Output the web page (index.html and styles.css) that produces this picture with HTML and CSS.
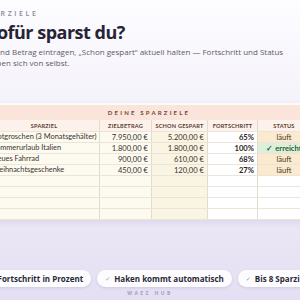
FILE: index.html
```html
<!DOCTYPE html>
<html lang="de">
<head>
<meta charset="utf-8">
<link rel="stylesheet" href="styles.css">
</head>
<body>
<div class="page">
  <header class="intro">
    <div class="eyebrow">Sparziele</div>
    <h1 class="title">Wofür sparst du?</h1>
    <p class="lead">Ziel und Betrag eintragen, „Schon gespart“ aktuell halten — Fortschritt und Status ergeben sich von selbst.</p>
  </header>

  <section class="sheet">
    <div class="band">Deine Sparziele</div>
    <div class="grid">
      <div class="row head">
        <div class="c name">Sparziel</div>
        <div class="c goal">Zielbetrag</div>
        <div class="c saved">Schon gespart</div>
        <div class="c prog">Fortschritt</div>
        <div class="c stat">Status</div>
      </div>
      <div class="row">
        <div class="c name">Notgroschen (3 Monatsgehälter)</div>
        <div class="c goal num">7.950,00 €</div>
        <div class="c saved num">5.200,00 €</div>
        <div class="c prog num">65%</div>
        <div class="c stat run">läuft</div>
      </div>
      <div class="row">
        <div class="c name">Sommerurlaub Italien</div>
        <div class="c goal num">1.800,00 €</div>
        <div class="c saved num">1.800,00 €</div>
        <div class="c prog num done">100%</div>
        <div class="c stat ok">✓ erreicht</div>
      </div>
      <div class="row">
        <div class="c name">Neues Fahrrad</div>
        <div class="c goal num">900,00 €</div>
        <div class="c saved num">610,00 €</div>
        <div class="c prog num">68%</div>
        <div class="c stat run">läuft</div>
      </div>
      <div class="row">
        <div class="c name">Weihnachtsgeschenke</div>
        <div class="c goal num">450,00 €</div>
        <div class="c saved num">120,00 €</div>
        <div class="c prog num">27%</div>
        <div class="c stat run">läuft</div>
      </div>
      <div class="row"><div class="c name"></div><div class="c goal"></div><div class="c saved"></div><div class="c prog"></div><div class="c stat"></div></div>
      <div class="row"><div class="c name"></div><div class="c goal"></div><div class="c saved"></div><div class="c prog"></div><div class="c stat"></div></div>
      <div class="row"><div class="c name"></div><div class="c goal"></div><div class="c saved"></div><div class="c prog"></div><div class="c stat"></div></div>
      <div class="row last"><div class="c name"></div><div class="c goal"></div><div class="c saved"></div><div class="c prog"></div><div class="c stat"></div></div>
    </div>
  </section>

  <div class="pills">
    <span class="pill"><span class="tick">✓</span>Fortschritt in Prozent</span>
    <span class="pill"><span class="tick">✓</span>Haken kommt automatisch</span>
    <span class="pill"><span class="tick">✓</span>Bis 8 Sparziele</span>
  </div>
  <div class="brand">Waez Hub</div>
</div>
</body>
</html>
```

FILE: styles.css
```css
html, body {
  margin: 0;
  padding: 0;
}
body {
  width: 300px;
  height: 300px;
  overflow: hidden;
  background: linear-gradient(180deg, #fdfcff 0%, #f5f3fa 35%, #ece8f6 70%, #e4dff2 100%);
  font-family: "Open Sans", "DejaVu Sans", sans-serif;
}
.page {
  width: 350px;
  margin-left: -25px;
  display: flex;
  flex-direction: column;
}
.intro {
  flex: none;
  padding: 10px 0 0 5px;
  height: 103px;
  box-sizing: border-box;
}
.eyebrow {
  font-size: 7px;
  line-height: 8px;
  font-weight: 600;
  letter-spacing: 2.6px;
  text-transform: uppercase;
  color: #8a8797;
}
.title {
  margin: 3px 0 0;
  font-size: 18px;
  line-height: 22px;
  font-weight: 700;
  letter-spacing: -0.5px;
  color: #262436;
}
.lead {
  margin: 3px 0 0;
  font-size: 8px;
  line-height: 11px;
  color: #5e5b6c;
  width: 312px;
}
.sheet {
  flex: none;
  margin-left: 13px;
  width: 322px;
  background: #fff;
  border-top: 2px solid #fbfafa;
  box-shadow: 0 2px 6px rgba(90, 70, 140, 0.12);
  font-family: "Lato", "Open Sans", sans-serif;
}
.band {
  height: 15px;
  line-height: 15px;
  background: #fbe4d9;
  text-align: center;
  font-size: 6px;
  font-weight: 700;
  letter-spacing: 2.2px;
  text-transform: uppercase;
  color: #6a4a3c;
}
.grid {
  display: flex;
  flex-direction: column;
}
.row {
  flex: none;
  display: grid;
  grid-template-columns: 112px 52px 56px 50px 52px;
  height: 11px;
  border-top: 1px solid #ebe5d9;
  box-sizing: border-box;
}
.row.last {
  border-bottom: 1px solid #ebe5d9;
  height: 12px;
}
.c {
  font-size: 7.6px;
  line-height: 10px;
  padding: 0 3px;
  color: #3a3330;
  white-space: nowrap;
  overflow: hidden;
  border-right: 1px solid #e2dccf;
}
.c.name { padding-left: 4px; background: #fdfaf0; font-size: 7.4px; }
.c.goal { background: #fdfaf0; }
.c.saved { background: #faf5e2; }
.c.prog { background: #ffffff; }
.c.stat { background: #ffffff; text-align: center; border-right: 0; }
.num { text-align: right; }
.c.prog.num { font-weight: 700; color: #2c2624; }
.c.stat.run { background: #fbeacd; color: #4a3a2a; }
.c.stat.ok { background: #dcefda; color: #2f5a2c; font-weight: 700; }
.row.head { border-top: 0; height: 11px; }
.row.head .c {
  background: #fcf1eb;
  text-align: center;
  font-size: 5.6px;
  font-weight: 700;
  text-transform: uppercase;
  letter-spacing: 0.2px;
  color: #5a3c2e;
  line-height: 11px;
}
.pills {
  flex: none;
  margin-top: 50px;
  display: flex;
  justify-content: center;
  gap: 6px;
}
.pill {
  flex: none;
  display: inline-flex;
  align-items: center;
  height: 17px;
  padding: 0 8px;
  border-radius: 9px;
  background: rgba(255, 255, 255, 0.88);
  box-shadow: 0 1px 3px rgba(80, 60, 140, 0.14);
  font-size: 8px;
  font-weight: 700;
  color: #2b2838;
  white-space: nowrap;
}
.tick {
  font-size: 6px;
  color: #8ea58a;
  margin-right: 4px;
}
.brand {
  margin-top: 3px;
  text-align: center;
  font-size: 5px;
  font-weight: 700;
  letter-spacing: 2.4px;
  text-transform: uppercase;
  color: #a5a1b4;
}
```
